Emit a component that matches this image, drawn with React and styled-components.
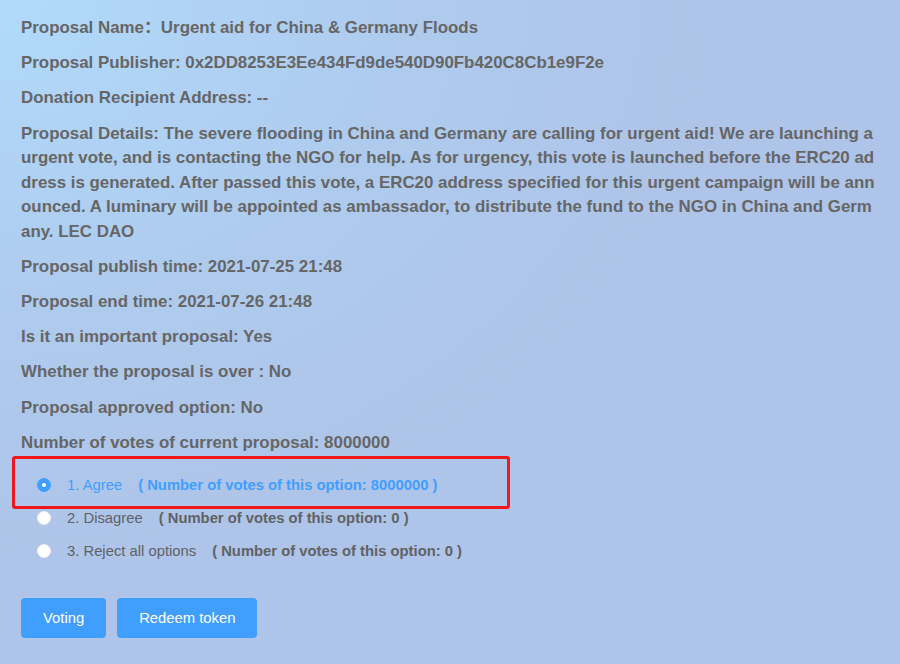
import React, { useState } from 'react'
import styled, { createGlobalStyle } from 'styled-components'

const GlobalStyle = createGlobalStyle`
  html, body {
    margin: 0;
    padding: 0;
  }
  body {
    font-family: "Liberation Sans", "Noto Sans CJK SC", Arial, sans-serif;
    background: radial-gradient(ellipse 900px 700px at 0 0, #b1dafb 0%, #aecbee 45%, #aec4e8 80%);
    background-color: #aec4e8;
    min-height: 100vh;
  }
`;

const options = [
    { label: '1. Agree', votes: 8000000 },
    { label: '2. Disagree', votes: 0 },
    { label: '3. Reject all options', votes: 0 },
];

const App = () => {
    const [picked, setPicked] = useState(0);

    return (
        <Page>
            <GlobalStyle />
            <Info>Proposal Name：Urgent aid for China &amp; Germany Floods</Info>
            <Info>Proposal Publisher: 0x2DD8253E3Ee434Fd9de540D90Fb420C8Cb1e9F2e</Info>
            <Info>Donation Recipient Address: --</Info>
            <Info>
                Proposal Details: The severe flooding in China and Germany are calling for urgent aid! We are launching a urgent vote, and is contacting the NGO for help. As for urgency, this vote is launched before the ERC20 address is generated. After passed this vote, a ERC20 address specified for this urgent campaign will be announced. A luminary will be appointed as ambassador, to distribute the fund to the NGO in China and Germany. LEC DAO
            </Info>
            <Info>Proposal publish time: 2021-07-25 21:48</Info>
            <Info>Proposal end time: 2021-07-26 21:48</Info>
            <Info>Is it an important proposal: Yes</Info>
            <Info>Whether the proposal is over : No</Info>
            <Info>Proposal approved option: No</Info>
            <Info>Number of votes of current proposal: 8000000</Info>

            <Options>
                {options.map((o, i) => (
                    <Option key={i} onClick={() => setPicked(i)}>
                        {i === 0 && <Highlight />}
                        <Dot $on={picked === i} />
                        <Label $on={picked === i}>{o.label}</Label>
                        <Count $on={picked === i}>( Number of votes of this option: {o.votes} )</Count>
                    </Option>
                ))}
            </Options>

            <Buttons>
                <Button>Voting</Button>
                <Button>Redeem token</Button>
            </Buttons>
        </Page>
    )
}

const Page = styled.div`
    padding: 16px 20px 30px 21px;
    color: #666;
`;

const Info = styled.p`
    margin: 0 0 10.7px;
    font-size: 16.9px;
    font-weight: bold;
    line-height: 24.5px;
    word-break: break-all;
`;

const Options = styled.div`
    display: flex;
    flex-direction: column;
    padding: 3px 0 0 16px;
`;

const Option = styled.label`
    position: relative;
    display: flex;
    align-items: center;
    height: 33px;
    font-size: 14.8px;
    cursor: pointer;
`;

const Highlight = styled.span`
    position: absolute;
    left: -25px;
    width: 492px;
    top: -13px;
    bottom: -7px;
    border: 3px solid #f5161b;
    border-radius: 3px;
    pointer-events: none;
`;

const Dot = styled.span`
    position: relative;
    width: 14px;
    height: 14px;
    box-sizing: border-box;
    border-radius: 50%;
    border: 1px solid ${p => p.$on ? '#409eff' : '#eef1f6'};
    background: ${p => p.$on ? '#409eff' : '#fff'};
    flex-shrink: 0;
    &::after {
        content: '';
        position: absolute;
        left: 50%;
        top: 50%;
        width: 4px;
        height: 4px;
        border-radius: 50%;
        background: #fff;
        transform: translate(-50%, -50%);
        display: ${p => p.$on ? 'block' : 'none'};
    }
`;

const Label = styled.span`
    margin-left: 16px;
    color: ${p => p.$on ? '#409eff' : '#606266'};
`;

const Count = styled.span`
    margin-left: 16px;
    font-weight: bold;
    color: ${p => p.$on ? '#409eff' : '#606266'};
`;

const Buttons = styled.div`
    display: flex;
    gap: 11px;
    margin-top: 30px;
`;

const Button = styled.button`
    height: 40px;
    padding: 0 22px;
    border: none;
    border-radius: 4px;
    background: #409eff;
    color: #fff;
    font-family: "Liberation Sans", Arial, sans-serif;
    font-size: 14.8px;
    cursor: pointer;
`;

export default App
